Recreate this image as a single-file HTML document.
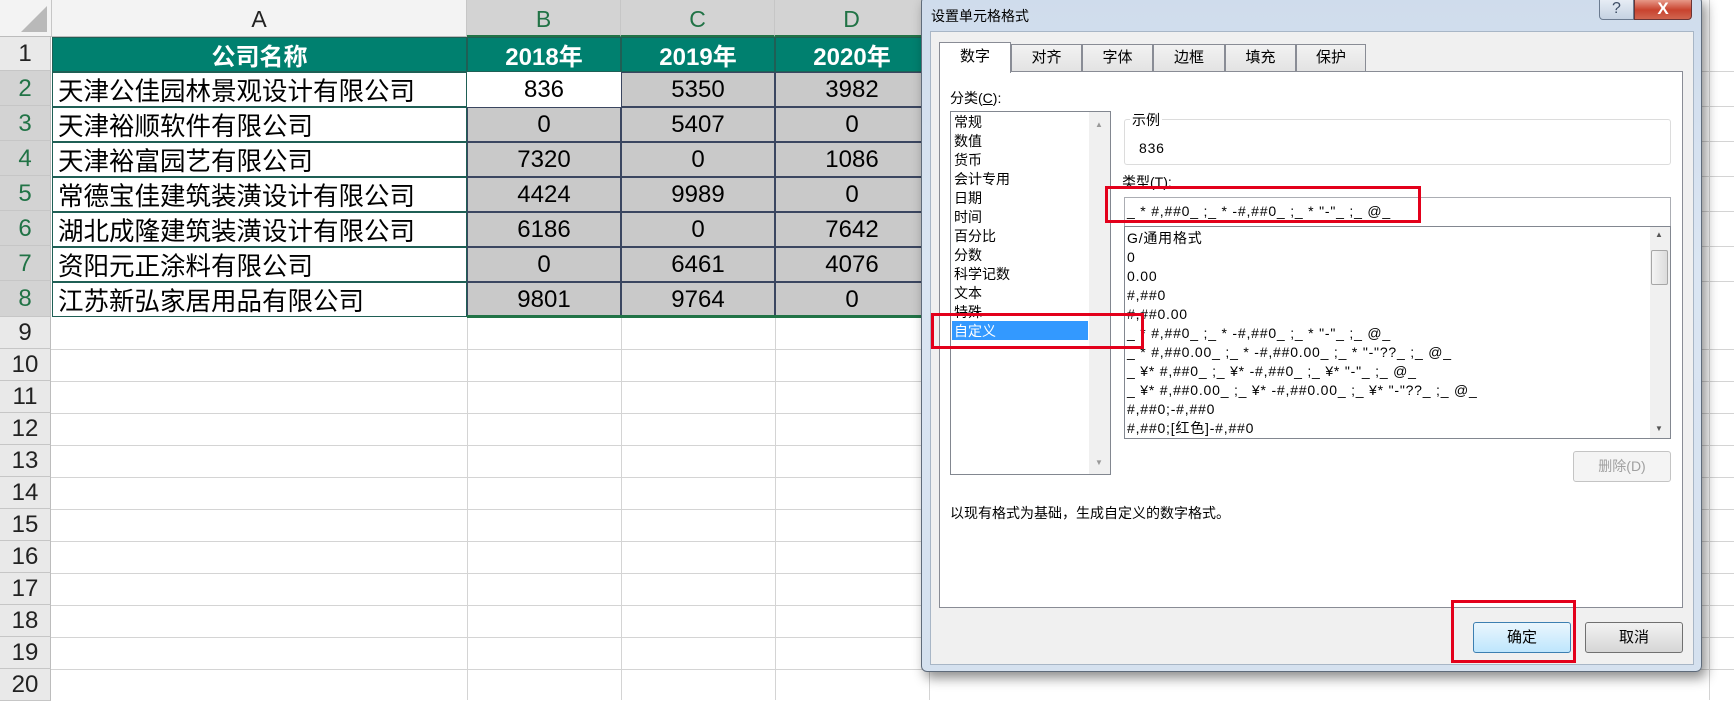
<!DOCTYPE html>
<html><head><meta charset="utf-8"><style>
*{margin:0;padding:0;box-sizing:border-box}
body{width:1734px;height:700px;overflow:hidden;background:#fff;position:relative;font-family:"Liberation Sans","Noto Sans CJK SC",sans-serif}
.a{position:absolute}
.hl{position:absolute;height:1px;background:#d4d4d4}
.vl{position:absolute;width:1px;background:#d4d4d4}
.rh{position:absolute;left:0;width:51px;background:#e9e9e9;border-bottom:1px solid #c6c6c6;border-right:1px solid #bcbcbc;text-align:center;font-size:24px;color:#222}
.rh.s{background:#d3d3d3;color:#217346}
.ch{position:absolute;top:0;height:37px;background:#f3f3f3;border-right:1px solid #c6c6c6;border-bottom:1px solid #bcbcbc;text-align:center;font-size:23px;line-height:38px;color:#222}
.ch.s{background:#d3d3d3;color:#217346;border-bottom:2px solid #217346}
.c{position:absolute;font-size:24px;display:flex;align-items:center;white-space:nowrap;color:#000}
.g{background:#c9c9c9;justify-content:center;border:1.5px solid #3a4660}
.t{background:#fff;border:1.5px solid #1f5f55;padding-left:5px;font-size:25.5px}
.h{background:#00806f;color:#fff;font-weight:bold;justify-content:center;border:1.5px solid #1f5f55}
.d{font-family:"Liberation Sans","Noto Sans CJK SC",sans-serif;font-size:14px;color:#000}
.red{position:absolute;border:3px solid #e3001b}
.lst{letter-spacing:0.8px}
</style></head><body>
<div class="hl" style="left:51px;top:349px;width:1683px"></div>
<div class="hl" style="left:51px;top:381px;width:1683px"></div>
<div class="hl" style="left:51px;top:413px;width:1683px"></div>
<div class="hl" style="left:51px;top:445px;width:1683px"></div>
<div class="hl" style="left:51px;top:477px;width:1683px"></div>
<div class="hl" style="left:51px;top:509px;width:1683px"></div>
<div class="hl" style="left:51px;top:541px;width:1683px"></div>
<div class="hl" style="left:51px;top:573px;width:1683px"></div>
<div class="hl" style="left:51px;top:605px;width:1683px"></div>
<div class="hl" style="left:51px;top:637px;width:1683px"></div>
<div class="hl" style="left:51px;top:669px;width:1683px"></div>
<div class="hl" style="left:929px;top:71px;width:805px"></div>
<div class="hl" style="left:929px;top:106px;width:805px"></div>
<div class="hl" style="left:929px;top:141px;width:805px"></div>
<div class="hl" style="left:929px;top:176px;width:805px"></div>
<div class="hl" style="left:929px;top:211px;width:805px"></div>
<div class="hl" style="left:929px;top:246px;width:805px"></div>
<div class="hl" style="left:929px;top:281px;width:805px"></div>
<div class="vl" style="left:467px;top:317px;height:383px"></div>
<div class="vl" style="left:621px;top:317px;height:383px"></div>
<div class="vl" style="left:775px;top:317px;height:383px"></div>
<div class="vl" style="left:929px;top:0;height:700px"></div>
<div class="vl" style="left:1709px;top:0;height:700px"></div>
<div class="ch" style="left:0;width:52px"><div style="position:absolute;right:4px;bottom:4px;width:0;height:0;border-left:26px solid transparent;border-bottom:26px solid #b9b9b9"></div></div>
<div class="ch" style="left:52px;width:415px">A</div>
<div class="ch s" style="left:467px;width:154px">B</div>
<div class="ch s" style="left:621px;width:154px">C</div>
<div class="ch s" style="left:775px;width:154px">D</div>
<div class="ch" style="left:929px;width:154px"></div>
<div class="rh" style="top:37px;height:34px;line-height:34px">1</div>
<div class="rh s" style="top:71px;height:35px;line-height:35px">2</div>
<div class="rh s" style="top:106px;height:35px;line-height:35px">3</div>
<div class="rh s" style="top:141px;height:35px;line-height:35px">4</div>
<div class="rh s" style="top:176px;height:35px;line-height:35px">5</div>
<div class="rh s" style="top:211px;height:35px;line-height:35px">6</div>
<div class="rh s" style="top:246px;height:35px;line-height:35px">7</div>
<div class="rh s" style="top:281px;height:36px;line-height:36px">8</div>
<div class="rh" style="top:317px;height:32px;line-height:32px">9</div>
<div class="rh" style="top:349px;height:32px;line-height:32px">10</div>
<div class="rh" style="top:381px;height:32px;line-height:32px">11</div>
<div class="rh" style="top:413px;height:32px;line-height:32px">12</div>
<div class="rh" style="top:445px;height:32px;line-height:32px">13</div>
<div class="rh" style="top:477px;height:32px;line-height:32px">14</div>
<div class="rh" style="top:509px;height:32px;line-height:32px">15</div>
<div class="rh" style="top:541px;height:32px;line-height:32px">16</div>
<div class="rh" style="top:573px;height:32px;line-height:32px">17</div>
<div class="rh" style="top:605px;height:32px;line-height:32px">18</div>
<div class="rh" style="top:637px;height:32px;line-height:32px">19</div>
<div class="rh" style="top:669px;height:32px;line-height:32px">20</div>
<div class="c h" style="left:52px;top:37px;width:415px;height:35px">公司名称</div>
<div class="c h" style="left:467px;top:37px;width:154px;height:35px">2018年</div>
<div class="c h" style="left:621px;top:37px;width:154px;height:35px">2019年</div>
<div class="c h" style="left:775px;top:37px;width:154px;height:35px">2020年</div>
<div class="c t" style="left:52px;top:72px;width:415px;height:35px">天津公佳园林景观设计有限公司</div>
<div class="c t" style="left:52px;top:107px;width:415px;height:35px">天津裕顺软件有限公司</div>
<div class="c t" style="left:52px;top:142px;width:415px;height:35px">天津裕富园艺有限公司</div>
<div class="c t" style="left:52px;top:177px;width:415px;height:35px">常德宝佳建筑装潢设计有限公司</div>
<div class="c t" style="left:52px;top:212px;width:415px;height:35px">湖北成隆建筑装潢设计有限公司</div>
<div class="c t" style="left:52px;top:247px;width:415px;height:35px">资阳元正涂料有限公司</div>
<div class="c t" style="left:52px;top:282px;width:415px;height:35px">江苏新弘家居用品有限公司</div>
<div class="c" style="left:467px;top:72px;width:154px;height:35px;justify-content:center;background:#fff">836</div>
<div class="c g" style="left:621px;top:72px;width:154px;height:35px">5350</div>
<div class="c g" style="left:775px;top:72px;width:154px;height:35px">3982</div>
<div class="c g" style="left:467px;top:107px;width:154px;height:35px">0</div>
<div class="c g" style="left:621px;top:107px;width:154px;height:35px">5407</div>
<div class="c g" style="left:775px;top:107px;width:154px;height:35px">0</div>
<div class="c g" style="left:467px;top:142px;width:154px;height:35px">7320</div>
<div class="c g" style="left:621px;top:142px;width:154px;height:35px">0</div>
<div class="c g" style="left:775px;top:142px;width:154px;height:35px">1086</div>
<div class="c g" style="left:467px;top:177px;width:154px;height:35px">4424</div>
<div class="c g" style="left:621px;top:177px;width:154px;height:35px">9989</div>
<div class="c g" style="left:775px;top:177px;width:154px;height:35px">0</div>
<div class="c g" style="left:467px;top:212px;width:154px;height:35px">6186</div>
<div class="c g" style="left:621px;top:212px;width:154px;height:35px">0</div>
<div class="c g" style="left:775px;top:212px;width:154px;height:35px">7642</div>
<div class="c g" style="left:467px;top:247px;width:154px;height:35px">0</div>
<div class="c g" style="left:621px;top:247px;width:154px;height:35px">6461</div>
<div class="c g" style="left:775px;top:247px;width:154px;height:35px">4076</div>
<div class="c g" style="left:467px;top:282px;width:154px;height:35px">9801</div>
<div class="c g" style="left:621px;top:282px;width:154px;height:35px">9764</div>
<div class="c g" style="left:775px;top:282px;width:154px;height:35px">0</div>
<div class="a" style="left:467px;top:315px;width:462px;height:3px;background:#217346"></div>

<div class="a" style="left:921px;top:-4px;width:781px;height:676px;background:linear-gradient(#cfdcec,#dbe6f3 40%,#d5e1ef);border:1px solid #5f6b7a;border-radius:6px;box-shadow:4px 6px 12px rgba(0,0,0,.45)"></div>
<div class="a d" style="left:931px;top:6px">设置单元格格式</div>
<div class="a" style="left:1599px;top:-2px;width:35px;height:22px;border:1px solid #6b7b90;border-radius:0 0 0 4px;background:linear-gradient(#e8eef6,#c5d2e2);text-align:center;font-size:16px;line-height:20px;color:#3e4e66">?</div>
<div class="a" style="left:1634px;top:-2px;width:58px;height:22px;border:1px solid #6b3434;border-radius:0 0 4px 0;background:linear-gradient(#e9a191,#c8432f 55%,#d0654f);text-align:center;font-size:17px;line-height:20px;color:#fff;font-weight:bold">X</div>
<div class="a" style="left:930px;top:31px;width:764px;height:634px;background:#f0f0f0;border:1px solid #a8b6c6"></div>
<div class="a" style="left:939px;top:71px;width:744px;height:537px;background:#fff;border:1px solid #898c95"></div>
<div class="a d" style="left:1011px;top:44px;width:71px;height:28px;border:1px solid #898c95;background:linear-gradient(#f2f2f2,#e3e3e3);text-align:center;line-height:26px;font-size:15px">对齐</div>
<div class="a d" style="left:1082px;top:44px;width:71px;height:28px;border:1px solid #898c95;background:linear-gradient(#f2f2f2,#e3e3e3);text-align:center;line-height:26px;font-size:15px">字体</div>
<div class="a d" style="left:1153px;top:44px;width:72px;height:28px;border:1px solid #898c95;background:linear-gradient(#f2f2f2,#e3e3e3);text-align:center;line-height:26px;font-size:15px">边框</div>
<div class="a d" style="left:1225px;top:44px;width:71px;height:28px;border:1px solid #898c95;background:linear-gradient(#f2f2f2,#e3e3e3);text-align:center;line-height:26px;font-size:15px">填充</div>
<div class="a d" style="left:1296px;top:44px;width:70px;height:28px;border:1px solid #898c95;background:linear-gradient(#f2f2f2,#e3e3e3);text-align:center;line-height:26px;font-size:15px">保护</div>
<div class="a d" style="left:939px;top:42px;width:72px;height:31px;border:1px solid #898c95;border-bottom:none;background:#fff;text-align:center;line-height:28px;font-size:15px">数字</div>
<div class="a d" style="left:950px;top:88px">分类(<u>C</u>):</div>
<div class="a" style="left:950px;top:111px;width:161px;height:364px;border:1px solid #828790;background:#fff"></div>
<div class="a" style="left:1089px;top:112px;width:21px;height:362px;background:#f0f0f0"></div>
<div class="a" style="left:1095px;top:120px;font-size:8px;color:#999">▲</div>
<div class="a" style="left:1095px;top:458px;font-size:8px;color:#999">▼</div>
<div class="a" style="left:952px;top:321px;width:136px;height:19px;background:#3399ff"></div>
<div class="a d" style="left:954px;top:113px;line-height:19px">常规<br>数值<br>货币<br>会计专用<br>日期<br>时间<br>百分比<br>分数<br>科学记数<br>文本<br>特殊<br><span style="color:#fff">自定义</span></div>
<div class="a" style="left:1124px;top:119px;width:547px;height:46px;border:1px solid #dcdcdc;border-radius:3px"></div>
<div class="a d" style="left:1130px;top:110px;background:#fff;padding:0 2px">示例</div>
<div class="a d lst" style="left:1139px;top:140px">836</div>
<div class="a d" style="left:1122px;top:172px">类型(<u>T</u>):</div>
<div class="a" style="left:1124px;top:197px;width:547px;height:30px;border:1px solid #abadb3;background:#fff"></div>
<div class="a d lst" style="left:1127px;top:203px;white-space:pre">_ * #,##0_ ;_ * -#,##0_ ;_ * "-"_ ;_ @_</div>
<div class="a" style="left:1124px;top:226px;width:547px;height:213px;border:1px solid #828790;background:#fff"></div>
<div class="a" style="left:1650px;top:227px;width:20px;height:211px;background:#f0f0f0"></div>
<div class="a" style="left:1651px;top:250px;width:17px;height:35px;border:1px solid #a6a6a6;border-radius:2px;background:linear-gradient(90deg,#f4f4f4,#dcdcdc)"></div>
<div class="a" style="left:1655px;top:230px;font-size:8px;color:#555">▲</div>
<div class="a" style="left:1655px;top:424px;font-size:8px;color:#555">▼</div>
<div class="a d lst" style="left:1127px;top:229px;line-height:19px;white-space:pre">G/通用格式
0
0.00
#,##0
#,##0.00
_ * #,##0_ ;_ * -#,##0_ ;_ * "-"_ ;_ @_
_ * #,##0.00_ ;_ * -#,##0.00_ ;_ * "-"??_ ;_ @_
_ ¥* #,##0_ ;_ ¥* -#,##0_ ;_ ¥* "-"_ ;_ @_
_ ¥* #,##0.00_ ;_ ¥* -#,##0.00_ ;_ ¥* "-"??_ ;_ @_
#,##0;-#,##0
#,##0;[红色]-#,##0</div>
<div class="a d" style="left:1573px;top:451px;width:98px;height:31px;border:1px solid #c4c4c4;border-radius:3px;background:#f4f4f4;color:#a0a0a0;text-align:center;line-height:29px">删除(D)</div>
<div class="a d" style="left:950px;top:503px">以现有格式为基础，生成自定义的数字格式。</div>
<div class="a d" style="left:1473px;top:622px;width:98px;height:31px;border:1px solid #3c7fb1;border-radius:3px;background:linear-gradient(#eaf6fd,#bee6fd);text-align:center;line-height:29px;font-size:15px">确定</div>
<div class="a d" style="left:1585px;top:622px;width:98px;height:31px;border:1px solid #707070;border-radius:3px;background:linear-gradient(#f2f2f2,#d6d6d6);text-align:center;line-height:29px;font-size:15px">取消</div>
<div class="red" style="left:1105px;top:186px;width:316px;height:37px"></div>
<div class="red" style="left:931px;top:313px;width:213px;height:36px"></div>
<div class="red" style="left:1451px;top:600px;width:125px;height:63px"></div>
</body></html>
